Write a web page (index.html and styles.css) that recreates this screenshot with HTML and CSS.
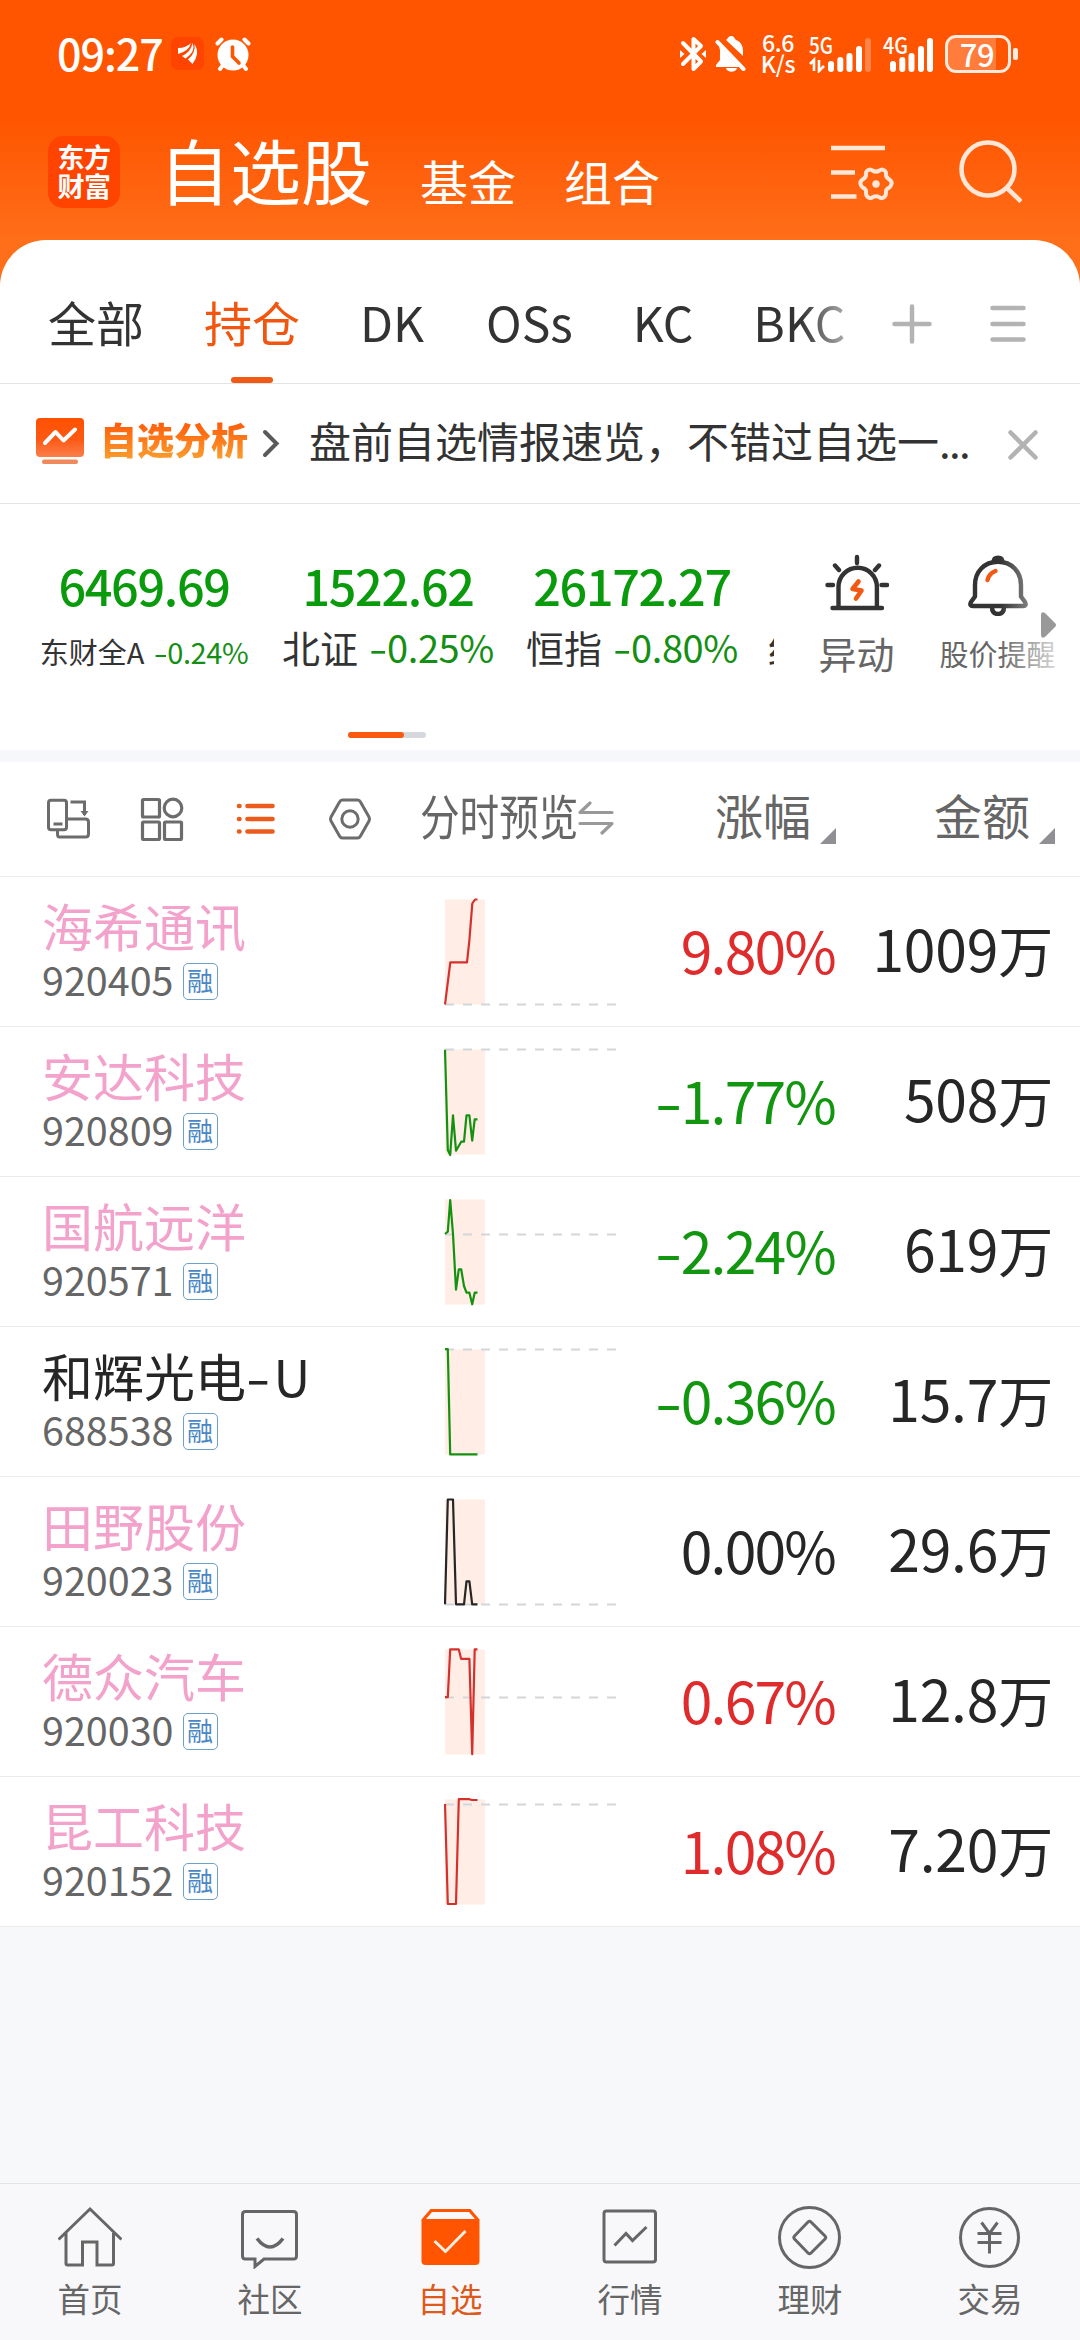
FILE: index.html
```html
<!DOCTYPE html>
<html lang="zh-CN">
<head>
<meta charset="utf-8">
<title>自选股</title>
<link rel="stylesheet" href="styles.css">
</head>
<body>
<div class="app">
  <header class="top">
    <div class="status">
      <span class="clock">09:27</span>
      <svg class="st-app" width="33" height="33" viewBox="0 0 33 33"><rect width="33" height="33" rx="7" fill="#ff4400"/><g fill="#fff"><path d="M7 11q8 0 13-5-2 8-13 11z"/><path d="M11 19q9-4 10.500-13 4 8-7 15.500z"/><path d="M17 22.500Q25 16 23.500 7q6 9-2 20z"/></g></svg>
      <svg class="st-alarm" width="36" height="34" viewBox="0 0 36 34"><circle cx="18" cy="18" r="15.500" fill="#fff"/><g fill="none" stroke="#fff" stroke-width="4" stroke-linecap="round"><path d="M2.500 6.500 6.500 2.500M33.500 6.500 29.500 2.500M5 32 8 28M31 32 28 28"/></g><path d="M17.500 10v9.500l6.500 6.500" fill="none" stroke="#ff5500" stroke-width="3.600" stroke-linecap="round"/></svg>
      <svg class="st-bt" width="26" height="36" viewBox="0 0 26 36"><path d="M3 7 21 25.500 13.500 33V3L21 10 3 28" fill="none" stroke="#fff" stroke-width="4" stroke-linejoin="round" stroke-linecap="round"/><path d="M0 14v8l4.500-4zM26 14v8l-4.500-4z" fill="#fff"/></svg>
      <svg class="st-mute" width="31" height="36" viewBox="0 0 31 36"><path d="M11 4c2-1 2-4 5-4s3 2 5 4c5 2 7 6 7 11v5L11 4zM4 10l20 21H1v-2l4-5V14zM11 32h11c-1 5-10 5-11 0z" fill="#fff"/><path d="M2.500 6 28.500 33" stroke="#fff" stroke-width="4" stroke-linecap="round"/></svg>
      <span class="speed"><span>6.6</span><span>K/s</span></span>
      <svg class="st-sig" width="64" height="38" viewBox="0 0 64 38"><text x="0" y="19" class="net" textLength="24" lengthAdjust="spacingAndGlyphs">5G</text><path d="M1 29l4-4v11M10 25v11l5-5" fill="none" stroke="#fff" stroke-width="2.600"/><g fill="#fff"><rect x="19" y="26" width="6" height="11" rx="3"/><rect x="28.300" y="22" width="6" height="15" rx="3"/><rect x="37.500" y="18" width="6" height="19" rx="3"/><rect x="47" y="11" width="6" height="26" rx="3"/><rect x="56" y="3" width="6" height="34" rx="3" opacity=".28"/></g></svg>
      <svg class="st-sig2" width="52" height="38" viewBox="0 0 52 38"><text x="0" y="19" class="net" textLength="25" lengthAdjust="spacingAndGlyphs">4G</text><g fill="#fff"><rect x="7" y="26" width="6" height="11" rx="3"/><rect x="16.300" y="22" width="6" height="15" rx="3"/><rect x="25.500" y="18" width="6" height="19" rx="3"/><rect x="35" y="11" width="6" height="26" rx="3"/><rect x="44" y="3" width="6" height="34" rx="3"/></g></svg>
      <span class="battery">79</span><span class="nub"></span>
    </div>
    <div class="titlebar">
      <div class="logo"><span>东方</span><span>财富</span></div>
      <h1>自选股</h1>
      <span class="sub">基金</span>
      <span class="sub">组合</span>
      <svg class="ic-set" width="64" height="60" viewBox="0 0 64 60" fill="none" stroke="#ffe6d6" stroke-width="4.600"><path d="M0 5h54M0 29.500h24M0 53.500h25.500"/><path d="M36.500 27.500q2.500-2 5 0 3.500 2.300 7 0 2.500-2 5 0 2 1.500 1.500 4.500 0 2.500 3.500 4.500 3 2.500 1.800 5-.8 3-3.800 4-2 1.500-1.500 4.500 0 3-2.500 4.500-2 1.500-4.500-.5-3-1.500-6 0-2.500 2-4.500.5-2.500-1.500-2.500-4.500.5-3-1.500-4.500-3-1-3.800-4-1.200-2.500 1.800-5 3.500-2 3.500-4.500-.5-3 1.500-4.500z" stroke-width="4"/><circle cx="45" cy="41" r="3.700" fill="#ffe6d6" stroke="none"/></svg>
      <svg class="ic-search" width="64" height="66" viewBox="0 0 64 66" fill="none" stroke="#ffe6d6" stroke-width="4.600"><circle cx="30" cy="32" r="26.500"/><path d="M49 51 63 64.500"/></svg>
    </div>
  </header>

  <main class="card">
    <nav class="tabs">
      <div class="tablist">
        <span>全部</span><span class="on">持仓</span><span>DK</span><span class="os">OSs</span><span>KC</span><span>BKC</span>
      </div>
      <svg width="40" height="40" viewBox="0 0 40 40" stroke="#b3b3b3" stroke-width="4.500" stroke-linecap="round"><path d="M2.500 20h35M20 2.500v35"/></svg>
      <svg class="ic-menu" width="36" height="38" viewBox="0 0 36 38" stroke="#b3b3b3" stroke-width="4.500" stroke-linecap="round"><path d="M2.500 3h31M2.500 19h31M2.500 34.500h31"/></svg>
    </nav>

    <section class="news">
      <svg width="48" height="47" viewBox="0 0 48 47"><defs><linearGradient id="g" x2="0" y2="1"><stop offset="0" stop-color="#ff5000"/><stop offset=".55" stop-color="#fd5914"/><stop offset="1" stop-color="#f97f4d"/></linearGradient></defs><rect width="48" height="39" rx="4" fill="url(#g)"/><rect x="6" y="41.500" width="36" height="4.500" rx="2" fill="#f08a5c"/><path d="M9 25 19.500 14 27.500 22.500 39 11.500" fill="none" stroke="#fff" stroke-width="4" stroke-linecap="round" stroke-linejoin="round"/></svg>
      <b>自选分析</b>
      <svg class="ic-chev" width="18" height="30" viewBox="0 0 18 30" fill="none" stroke="#5a5a5a" stroke-width="4" stroke-linecap="round"><path d="M3 3 14.500 14.500 3 26"/></svg>
      <span class="headline">盘前自选情报速览，不错过自选一<i>...</i></span>
      <svg class="ic-close" width="32" height="32" viewBox="0 0 32 32" stroke="#b3b3b3" stroke-width="4.500" stroke-linecap="round"><path d="M3.500 3.500l25 25M28.500 3.500l-25 25"/></svg>
    </section>

    <section class="indices">
      <div class="quotes">
        <div class="q small"><strong>6469.69</strong><p>东财全A<em><u>-</u>0.24%</em></p></div>
        <div class="q"><strong>1522.62</strong><p>北证<em><u>-</u>0.25%</em></p></div>
        <div class="q"><strong>26172.27</strong><p>恒指<em><u>-</u>0.80%</em></p></div>
        <div class="q"><strong></strong><p>红</p></div>
        <div class="pager"><span></span></div>
      </div>
      <div class="tools">
        <div class="tool">
          <svg width="64" height="62" viewBox="0 0 64 62" fill="none" stroke="#333" stroke-width="4.400" stroke-linecap="round"><path d="M13.500 54V33a19.200 19.200 0 0 1 38.400 0v21M7.500 54h49.500M32 3v6M2.500 31h5.500M56.500 31h5.500M10 11.500l4 4.500M54 11.500l-4 4.500"/><path d="M33.500 27.500 27.500 35 36.500 36.500 31 44.500" stroke="#f05a14" stroke-width="4.600" stroke-linejoin="round"/></svg>
          <span>异动</span>
        </div>
        <div class="tool t2">
          <svg width="62" height="62" viewBox="0 0 62 62" fill="none" stroke="#333" stroke-width="4.400" stroke-linecap="round" stroke-linejoin="round"><path d="M8 42.500V31C8 18 17 7.800 31 7.800S54 18 54 31v11.500L58 48q2 4-2 4H6q-4 0-2-4z"/><path d="M24.500 7.500q0-6 6.500-6t6.500 6z" fill="#333" stroke="none"/><path d="M25 53q0 7 6 7t6-7"/><path d="M20.500 26q1.500-6.500 8-9" stroke="#f05a14"/></svg>
          <span>股价提醒</span>
        </div>
        <div class="fade"></div>
        <svg class="arrow" width="16" height="26" viewBox="0 0 16 26"><path d="M0 3q0-4 4-2l10 10q2 2 0 4L4 25q-4 2-4-2z" fill="#999"/></svg>
      </div>
    </section>

    <section class="thead">
      <div class="modes">
        <svg width="44" height="44" viewBox="0 0 44 44" fill="none" stroke="#6c6c6c" stroke-width="3"><rect x="2.500" y="3.300" width="18" height="29.500" rx="2.500"/><path d="M7.500 27h9M24.500 5h14v13M20.500 22h19q3 0 3 3v12q0 3-3 3h-26q-2 0-2-3v-4"/><path d="M34.500 14h8L38.500 19.500z" fill="#6c6c6c" stroke="none"/></svg>
        <svg width="44" height="44" viewBox="0 0 44 44" fill="none" stroke="#6c6c6c" stroke-width="3.200"><rect x="2.500" y="2.500" width="17" height="17.500" rx="1"/><circle cx="33" cy="11" r="8.800"/><rect x="2.500" y="25" width="17" height="17.500" rx="1"/><rect x="24.500" y="25" width="17" height="17.500" rx="1"/></svg>
        <svg width="44" height="44" viewBox="0 0 44 44" stroke="#ec5b1b" stroke-width="4.600" stroke-linecap="round"><path d="M5 9h.5M13.500 9h25M5 22h.5M13.500 22h25M5 34.500h.5M13.500 34.500h25"/></svg>
        <svg width="44" height="44" viewBox="0 0 44 44" fill="none" stroke="#6c6c6c" stroke-width="3" stroke-linejoin="round"><path d="M14.500 3h15q2 0 3 2l8.500 15q1 2 0 4l-8.500 15q-1 2-3 2h-15q-2 0-3-2L3 24q-1-2 0-4L11.500 5q1-2 3-2z"/><circle cx="22" cy="22" r="8.200"/></svg>
      </div>
      <span class="preview">分时预览</span>
      <svg class="ic-swap" width="36" height="34" viewBox="0 0 36 34" fill="none" stroke="#999" stroke-width="3.200" stroke-linecap="round" stroke-linejoin="round"><path d="M34 11.500H2L12 2M2 22.500h32L24 32"/></svg>
      <span class="col c1">涨幅<svg width="16" height="16"><path d="M16 0v16H0z" fill="#8f8f94"/></svg></span>
      <span class="col c2">金额<svg width="16" height="16"><path d="M16 0v16H0z" fill="#8f8f94"/></svg></span>
    </section>

    <div class="row up">
      <div class="name"><b>海希通讯</b><span>920405<i>融</i></span></div>
      <svg class="chart" viewBox="0 -2 174 110"><rect x="1" y=".5" width="40" height="105"/><path class="dash" d="M1 105.500h172"/><polyline points="1,105.500 6.300,63.300 23,63.300 25.400,41 28.300,4.500 31,.5 33.500,.5"/></svg>
      <span class="pct">9.80%</span><span class="amt">1009<i>万</i></span>
    </div>
    <div class="row down">
      <div class="name"><b>安达科技</b><span>920809<i>融</i></span></div>
      <svg class="chart" viewBox="0 -2 174 110"><rect x="1" y=".5" width="40" height="105"/><path class="dash" d="M1 .5h172"/><polyline points="1,.7 3.800,101 6.200,106 9,66.300 12,101.700 17.200,92.700 20,92.700 22.500,66.300 25.400,66.300 28.200,91.700 30.700,70.300 33.500,70.300"/></svg>
      <span class="pct"><u>-</u>1.77%</span><span class="amt">508<i>万</i></span>
    </div>
    <div class="row down">
      <div class="name"><b>国航远洋</b><span>920571<i>融</i></span></div>
      <svg class="chart" viewBox="0 -2 174 110"><rect x="1" y=".5" width="40" height="105"/><path class="dash" d="M1 35.500h172"/><polyline points="1,35 3.800,32.700 6.200,1 9,35 12,90.700 14.800,70.300 17.200,70.300 20,87 22.500,93.700 25.400,93.700 28.200,105.300 30.700,93.700 33.500,93.700"/></svg>
      <span class="pct"><u>-</u>2.24%</span><span class="amt">619<i>万</i></span>
    </div>
    <div class="row down plain">
      <div class="name"><b>和辉光电<u>-</u>U</b><span>688538<i>融</i></span></div>
      <svg class="chart" viewBox="0 -2 174 110"><rect x="1" y=".5" width="40" height="105"/><path class="dash" d="M1 .5h172"/><polyline points="1,.2 3.800,.2 6.200,105.400 33.500,105.400"/></svg>
      <span class="pct"><u>-</u>0.36%</span><span class="amt">15.7<i>万</i></span>
    </div>
    <div class="row flat">
      <div class="name"><b>田野股份</b><span>920023<i>融</i></span></div>
      <svg class="chart" viewBox="0 -2 174 110"><rect x="1" y=".5" width="40" height="105"/><path class="dash" d="M1 105.500h172"/><polyline points="1,105.300 3.800,.5 9,.5 12,105.300 20,105.300 22.500,82.400 25.400,82.400 28.200,105.300 33.500,105.300"/></svg>
      <span class="pct">0.00%</span><span class="amt">29.6<i>万</i></span>
    </div>
    <div class="row up">
      <div class="name"><b>德众汽车</b><span>920030<i>融</i></span></div>
      <svg class="chart" viewBox="0 -2 174 110"><rect x="1" y=".5" width="40" height="105"/><path class="dash" d="M1 48.500h172"/><polyline points="1,48.200 3.800,48.200 6.200,.4 14.800,.4 17.200,9.900 25.400,9.900 28.200,105.200 30.700,.4 33.500,.4"/></svg>
      <span class="pct">0.67%</span><span class="amt">12.8<i>万</i></span>
    </div>
    <div class="row up">
      <div class="name"><b>昆工科技</b><span>920152<i>融</i></span></div>
      <svg class="chart" viewBox="0 -2 174 110"><rect x="1" y=".5" width="40" height="105"/><path class="dash" d="M1 5.500h172"/><polyline points="1,5 3.800,105 12,105 14.800,.2 25.400,.2 28,1 33.500,1"/></svg>
      <span class="pct">1.08%</span><span class="amt">7.20<i>万</i></span>
    </div>
  </main>

  <nav class="bottom">
    <div><svg viewBox="0 0 64 64"><path d="M.5 34.500 32 4 63.500 34.500M8 28v30.500q0 1.500 1.500 1.500h15V37H39v23h15q1.500 0 1.500-1.500V28"/></svg><span>首页</span></div>
    <div><svg viewBox="0 0 64 64"><path d="M7.500 6.500h48q3 0 3 3v41.500q0 3-3 3H26l-9 7.500V54H7.500q-3 0-3-3V9.500q0-3 3-3z"/><path d="M19 33.500q13 17 26 0" stroke-width="3.600"/></svg><span>社区</span></div>
    <div class="on"><svg viewBox="0 0 64 64"><path d="M12.500 4h40l9 10.500V56q0 4-4 4h-50q-4 0-4-4V14.500z" fill="#ff5500" stroke="none"/><path d="M14 7h37l6 7H8z" fill="#f8f8fb" stroke="none"/><path d="M16.500 36 27.500 46.500 47.500 26" stroke="#ffeee2"/></svg><span>自选</span></div>
    <div><svg viewBox="0 0 64 64"><rect x="6" y="6" width="51.500" height="51" rx="2.500"/><path d="M16.500 40.500 28 28.500 34.500 35.500 48.500 22"/></svg><span>行情</span></div>
    <div><svg viewBox="0 0 64 64"><circle cx="31.500" cy="32.500" r="30"/><path d="M30 17q1.500-1.500 3 0l14 14q1.500 1.500 0 3L33 48q-1.500 1.500-3 0L16.500 34q-1.500-1.500 0-3z"/></svg><span>理财</span></div>
    <div><svg viewBox="0 0 64 64"><circle cx="31.500" cy="32.500" r="29"/><path d="M23.500 17.500 31.500 28.500 39.500 17.500M19.500 28.500h24M19.500 37.500h24M31.500 28.500v20"/></svg><span>交易</span></div>
  </nav>
</div>
</body>
</html>
```
FILE: styles.css
```css
* { box-sizing: border-box; margin: 0; padding: 0; }
body { width: 1080px; height: 2340px; background: #f7f8fa; overflow: hidden; font-family: "Noto Sans CJK SC", sans-serif; color: #333; white-space: nowrap; }
svg { flex: none; display: block; }
i, em { font-style: normal; }
u { display: inline-block; text-decoration: none; transform: scaleX(1.4); transform-origin: 60% 50%; margin: 0 .06em 0 .05em; }
.app { display: flex; flex-direction: column; height: 2340px; }

.top { height: 300px; background: linear-gradient(#ff5500 0, #ff5500 118px, #ff6e19 240px, #ff6e19 100%); color: #fff; }
.status { display: flex; align-items: flex-start; height: 108px; padding-top: 35px; padding-left: 57px; }
.clock { width: 114px; font-size: 43px; line-height: 34px; letter-spacing: -1px; font-weight: 500; }
.st-app { margin-top: 2px; }
.st-alarm { margin: 2px 0 0 11px; }
.st-bt { margin: 1px 0 0 429px; }
.st-mute { margin: 1px 0 0 9px; }
.speed { display: flex; flex-direction: column; width: 36px; margin-left: 14px; font-size: 23px; font-weight: 500; line-height: 21px; text-align: center; letter-spacing: -.3px; margin-top: -3px; }
.st-sig { margin-left: 13px; }
.st-sig2 { margin-left: 10px; }
.net { font-size: 23px; font-weight: 500; fill: #fff; }
.battery { width: 66px; height: 38px; margin-left: 10px; border: 3px solid #ffeadd; border-radius: 11px; background: linear-gradient(90deg, rgba(255,255,255,.23) 48px, transparent 48px); font-size: 31px; font-weight: 500; line-height: 31px; text-align: center; padding-right: 2px; letter-spacing: -.5px; }
.nub { width: 5px; height: 12px; margin: 13px 0 0 2px; border-radius: 2px; background: #ffeadd; }

.titlebar { display: flex; align-items: flex-start; padding: 28px 0 0 48px; }
.logo { display: flex; flex-direction: column; justify-content: center; width: 72px; height: 72px; border-radius: 15px; background: #ff4400; font-size: 27px; font-weight: 700; line-height: 29px; text-align: center; padding-bottom: 3px; letter-spacing: -.5px; }
h1 { margin: -5px 0 0 39px; width: 261px; font-size: 71px; font-weight: 400; line-height: 74px; }
.sub { width: 96px; margin: 19px 48px 0 0; font-size: 48px; line-height: 50px; }
.ic-set { margin: 7px 0 0 123px; }
.ic-search { margin: 1px 0 0 63px; }

.card { position: relative; margin-top: -60px; background: #fff; border-radius: 46px 46px 0 0; }
.tabs { display: flex; align-items: center; height: 144px; border-bottom: 1px solid #e4e4e4; }
.tablist { display: flex; gap: 60px; width: 850px; height: 143px; padding: 51px 0 0 48px; margin-right: 42px; font-size: 48px; line-height: 60px; overflow: hidden; -webkit-mask: linear-gradient(90deg, #000 800px, rgba(0,0,0,.35) 850px); mask: linear-gradient(90deg, #000 800px, rgba(0,0,0,.35) 850px); }
.tabs svg { margin-top: 24px; }
.os { margin-left: 2px; }
.ic-menu { margin-left: 58px; }
.tablist .on { display: flex; flex-direction: column; align-items: center; height: 92px; color: #f0560f; }
.tablist .on::after { content: ""; width: 42px; height: 6px; margin-top: 26px; border-radius: 3px; background: #f05a14; flex: none; }

.news { display: flex; align-items: flex-start; height: 120px; border-bottom: 1px solid #e4e4e4; padding: 34px 0 0 36px; }
.news b { width: 148px; margin: -2px 0 0 16px; font-size: 37px; font-weight: 900; line-height: 46px; background: linear-gradient(#ff5c0a 15%, #fa9a2b 90%); -webkit-background-clip: text; background-clip: text; color: transparent; }
.ic-chev { margin: 11px 0 0 14px; }
.headline { margin: -1px 0 0 29px; width: 662px; font-size: 42px; line-height: 46px; }
.headline i { letter-spacing: -1.7px; }
.ic-close { margin: 11px 0 0 36px; }

.indices { display: flex; height: 258px; border-bottom: 12px solid #f6f7fa; }
.quotes { position: relative; display: flex; width: 774px; padding: 49px 0 0 22px; overflow: hidden; }
.q { flex: none; width: 244px; text-align: center; }
.q strong { display: block; height: 64px; font-size: 48.5px; font-weight: 500; line-height: 64px; color: #0a9b0d; letter-spacing: -1.3px; }
.q p { display: flex; justify-content: center; height: 50px; margin-top: 5px; font-size: 38px; line-height: 50px; }
.q em { margin-left: 12px; color: #148f14; letter-spacing: -.4px; }
.q.small p { font-size: 29px; line-height: 58px; }
.q.small em { margin-left: 10px; }
.q:nth-child(4) p { justify-content: flex-start; padding-left: 14px; }
.pager { position: absolute; left: 348px; bottom: 12px; width: 78px; height: 6px; border-radius: 3px; background: #d5d8dd; }
.pager span { display: block; width: 56px; height: 6px; border-radius: 3px; background: #fa5a0f; }
.tools { position: relative; display: flex; flex: 1; padding: 50px 0 0 12px; }
.tool { display: flex; flex-direction: column; align-items: center; width: 141px; font-size: 38px; line-height: 50px; color: #666; }
.tool span { margin-top: 12px; }
.t2 span { font-size: 29px; }
.fade { position: absolute; right: 0; top: 0; width: 80px; height: 240px; background: linear-gradient(90deg, rgba(255,255,255,0), #fff 75px); }
.arrow { position: absolute; left: 267px; top: 108px; }

.thead { display: flex; align-items: flex-start; height: 115px; border-bottom: 1px solid #ebebeb; font-size: 48px; line-height: 60px; color: #666; }
.modes { display: flex; gap: 50px; width: 420px; padding: 35px 0 0 46px; }
.preview { width: 157px; margin-top: 22px; transform: scaleX(.825); transform-origin: 0 50%; }
.ic-swap { margin: 39px 0 0 1px; }
.col { display: flex; align-items: flex-start; margin-top: 22px; }
.col svg { margin: 44px 0 0 9px; }
.c1 { margin-left: 101px; }
.c2 { margin-left: 98px; }

.row { display: flex; align-items: flex-start; height: 150px; border-bottom: 1px solid #ebebeb; }
.name { display: flex; flex-direction: column; width: 402px; margin-left: 42px; padding-top: 20px; }
.name b { font-size: 51px; font-weight: 400; line-height: 56px; color: #f2a2cb; }
.name u { margin: 0 .11em 0 .08em; }
.plain .name b { color: #262626; }
.name span { display: flex; margin-top: 6px; font-size: 39.5px; line-height: 40px; color: #666; }
.name i { width: 35px; height: 37px; margin: 4px 0 0 9px; border: 1.500px solid #6fa0cc; border-radius: 5px; font-size: 26px; line-height: 31px; text-align: center; color: #4a87c4; }
.chart { width: 174px; height: 110px; margin-top: 20px; }
.chart rect { fill: #ffede6; }
.dash { stroke: #d3d6da; stroke-width: 2; stroke-dasharray: 9 9; }
.chart polyline { fill: none; stroke-width: 2.200; stroke-linejoin: round; }
.pct { width: 217px; margin-top: 42px; font-size: 57px; line-height: 60px; text-align: right; letter-spacing: -1.8px; }
.amt { width: 218px; margin-top: 40px; font-size: 57px; line-height: 60px; text-align: right; color: #262626; letter-spacing: -.2px; }
.amt i { font-size: 55px; }
.up .pct { color: #df2b2b; }
.up polyline { stroke: #d6302c; }
.down .pct { color: #12950f; }
.down polyline { stroke: #14920f; }
.flat .pct { color: #262626; }
.flat polyline { stroke: #262626; }

.bottom { display: flex; height: 157px; margin-top: auto; border-top: 1px solid #e4e4e6; background: #f8f8fb; }
.bottom div { display: flex; flex-direction: column; align-items: center; width: 180px; padding-top: 21px; font-size: 32.500px; line-height: 40px; color: #666; }
.bottom svg { width: 64px; height: 64px; fill: none; stroke: #666; stroke-width: 3; }
.bottom span { margin-top: 9px; }
.bottom .on { color: #dc5a1c; }
```
